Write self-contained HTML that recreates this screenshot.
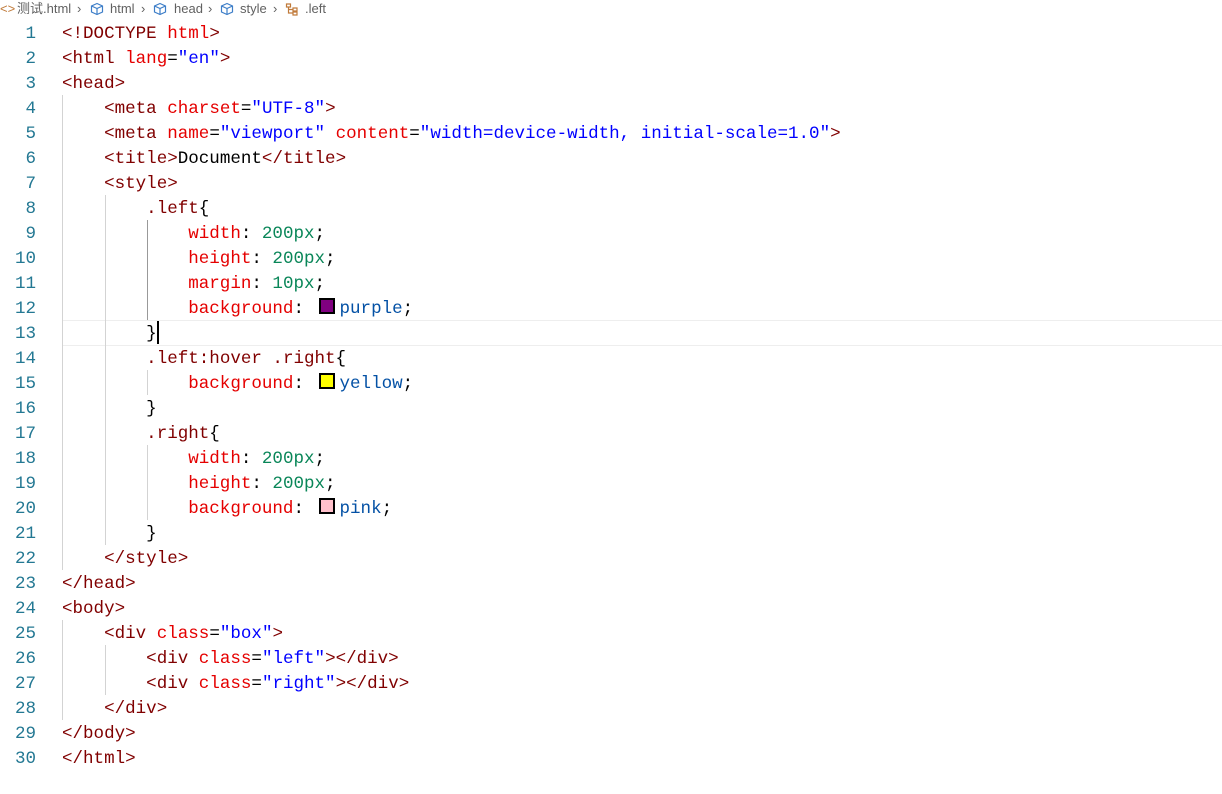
<!DOCTYPE html>
<html><head><meta charset="utf-8"><style>
body{margin:0;background:#fff;width:1222px;height:794px;overflow:hidden;position:relative;font-family:"Liberation Mono",monospace}
.bc{position:absolute;top:0;height:18px;font:13px "Liberation Sans","Noto Sans CJK SC",sans-serif;color:#616161;line-height:18px;white-space:nowrap}
.ic{position:absolute;top:2px}
.ln{position:absolute;left:0;width:36px;text-align:right;color:#237893;font-size:17.55px;line-height:25px}
.cl{position:absolute;left:62px;font-size:17.55px;line-height:25px;white-space:pre;color:#000}
.t{color:#800000}.a{color:#e50000}.s{color:#0000ff}.n{color:#098658}.v{color:#0451a5}
.sw{display:inline-block;width:12px;height:12px;border:2px solid #000;margin:0 5px 0 4px;vertical-align:-1px}
.g{position:absolute;width:1px;background:#d3d3d3}
</style></head><body>
<div class="bc" style="left:0;color:#c07a3a">&lt;&gt;</div>
<div class="bc" style="left:17px">测试.html</div>
<div class="bc" style="left:77px">›</div>
<svg class="ic" width="14" height="14" viewBox="0 0 14 14" style="left:90px"><path d="M7 1.5 12.5 4v6L7 12.5 1.5 10V4z M1.5 4 7 6.5 12.5 4 M7 6.5v6" fill="none" stroke="#3d7ec8" stroke-width="1.2"/></svg>
<div class="bc" style="left:110px">html</div>
<div class="bc" style="left:141px">›</div>
<svg class="ic" width="14" height="14" viewBox="0 0 14 14" style="left:153px"><path d="M7 1.5 12.5 4v6L7 12.5 1.5 10V4z M1.5 4 7 6.5 12.5 4 M7 6.5v6" fill="none" stroke="#3d7ec8" stroke-width="1.2"/></svg>
<div class="bc" style="left:174px">head</div>
<div class="bc" style="left:208px">›</div>
<svg class="ic" width="14" height="14" viewBox="0 0 14 14" style="left:220px"><path d="M7 1.5 12.5 4v6L7 12.5 1.5 10V4z M1.5 4 7 6.5 12.5 4 M7 6.5v6" fill="none" stroke="#3d7ec8" stroke-width="1.2"/></svg>
<div class="bc" style="left:240px">style</div>
<div class="bc" style="left:273px">›</div>
<svg class="ic" width="14" height="14" viewBox="0 0 14 14" style="left:285px"><path d="M1.5 2h4v3h-4z M8 6h4v3H8z M8 10h4v3H8z M3.5 5v6H8 M3.5 7.5H8" fill="none" stroke="#c07a3a" stroke-width="1.2"/></svg>
<div class="bc" style="left:305px">.left</div>

<div style="position:absolute;left:62px;top:320px;width:1160px;height:24px;border-top:1px solid #eee;border-bottom:1px solid #eee"></div>
<div class="g" style="left:62px;top:95px;height:475px"></div>
<div class="g" style="left:105px;top:195px;height:350px"></div>
<div class="g" style="left:147px;top:220px;height:100px;background:#999"></div>
<div class="g" style="left:147px;top:370px;height:25px"></div>
<div class="g" style="left:147px;top:445px;height:75px"></div>
<div class="g" style="left:62px;top:620px;height:100px"></div>
<div class="g" style="left:105px;top:645px;height:50px"></div>
<div style="position:absolute;left:157px;top:321px;width:2px;height:23px;background:#000"></div>

<div class="ln" style="top:22px">1<br>2<br>3<br>4<br>5<br>6<br>7<br>8<br>9<br>10<br>11<br>12<br>13<br>14<br>15<br>16<br>17<br>18<br>19<br>20<br>21<br>22<br>23<br>24<br>25<br>26<br>27<br>28<br>29<br>30</div>
<div class="cl" style="top:22px"><span class="t">&lt;!DOCTYPE</span> <span class="a">html</span><span class="t">&gt;</span>
<span class="t">&lt;html</span> <span class="a">lang</span>=<span class="s">"en"</span><span class="t">&gt;</span>
<span class="t">&lt;head&gt;</span>
    <span class="t">&lt;meta</span> <span class="a">charset</span>=<span class="s">"UTF-8"</span><span class="t">&gt;</span>
    <span class="t">&lt;meta</span> <span class="a">name</span>=<span class="s">"viewport"</span> <span class="a">content</span>=<span class="s">"width=device-width, initial-scale=1.0"</span><span class="t">&gt;</span>
    <span class="t">&lt;title&gt;</span>Document<span class="t">&lt;/title&gt;</span>
    <span class="t">&lt;style&gt;</span>
        <span class="t">.left</span>{
            <span class="a">width</span>: <span class="n">200px</span>;
            <span class="a">height</span>: <span class="n">200px</span>;
            <span class="a">margin</span>: <span class="n">10px</span>;
            <span class="a">background</span>: <span class="sw" style="background:purple"></span><span class="v">purple</span>;
        }
        <span class="t">.left:hover .right</span>{
            <span class="a">background</span>: <span class="sw" style="background:yellow"></span><span class="v">yellow</span>;
        }
        <span class="t">.right</span>{
            <span class="a">width</span>: <span class="n">200px</span>;
            <span class="a">height</span>: <span class="n">200px</span>;
            <span class="a">background</span>: <span class="sw" style="background:pink"></span><span class="v">pink</span>;
        }
    <span class="t">&lt;/style&gt;</span>
<span class="t">&lt;/head&gt;</span>
<span class="t">&lt;body&gt;</span>
    <span class="t">&lt;div</span> <span class="a">class</span>=<span class="s">"box"</span><span class="t">&gt;</span>
        <span class="t">&lt;div</span> <span class="a">class</span>=<span class="s">"left"</span><span class="t">&gt;&lt;/div&gt;</span>
        <span class="t">&lt;div</span> <span class="a">class</span>=<span class="s">"right"</span><span class="t">&gt;&lt;/div&gt;</span>
    <span class="t">&lt;/div&gt;</span>
<span class="t">&lt;/body&gt;</span>
<span class="t">&lt;/html&gt;</span></div>
</body></html>
